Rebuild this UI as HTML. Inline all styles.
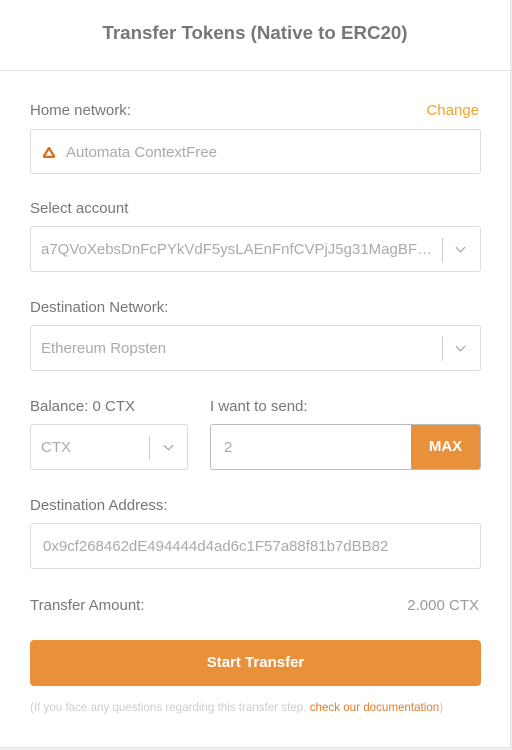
<!DOCTYPE html>
<html><head><style>
body{margin:0;width:512px;height:750px;background:#f0f0f0;font-family:"Liberation Sans",sans-serif;position:relative;overflow:hidden}
.card{position:absolute;left:0;top:0;width:510px;height:747px;background:#fff;border-right:1px solid #e4e4e4;border-bottom:1px solid #e4e4e4}
.t{position:absolute;left:0;width:510px;top:22px;text-align:center;font-size:18.7px;font-weight:bold;color:#777}
.hr{position:absolute;left:0;top:70px;width:510px;height:1px;background:#e2e2e2}
.l{position:absolute;font-size:15px;color:#777}
.box{position:absolute;border:1px solid #dcdcdc;border-radius:3px;box-sizing:border-box;font-size:15px;color:#aaa;line-height:45px;padding-left:10px;height:46px;white-space:nowrap;overflow:hidden}
.sep{position:absolute;top:11px;width:1px;height:24px;background:#ccc}
.ch{position:absolute;top:17px;width:6px;height:6px;border-right:1.5px solid #999;border-bottom:1.5px solid #999;transform:rotate(45deg)}
</style></head><body><div class="card">
<div class="t">Transfer Tokens (Native to ERC20)</div>
<div class="hr"></div>
<div class="l" style="left:30px;top:102px">Home network:</div>
<div class="l" style="right:31px;top:102px;color:#f5a02c">Change</div>
<div class="box" style="left:30px;top:129px;width:451px;height:45px;padding-left:35px">Automata ContextFree
<svg style="position:absolute;left:12px;top:17px" width="12" height="11" viewBox="0 0 12 11"><path d="M6 1 L11 9 Q11 10 10 10 L2 10 Q1 10 1 9 Z" fill="none" stroke="#d9701f" stroke-width="2.4" stroke-linejoin="round"/></svg></div>
<div class="l" style="left:30px;top:200px">Select account</div>
<div class="box" style="left:30px;top:226px;width:451px;padding-right:45px">a7QVoXebsDnFcPYkVdF5ysLAEnFnfCVPjJ5g31MagBF…<div style="position:absolute;right:0;top:0;width:38px;height:44px;background:#fff"></div><div class="sep" style="right:37px"></div><div class="ch" style="right:16px"></div></div>
<div class="l" style="left:30px;top:299px">Destination Network:</div>
<div class="box" style="left:30px;top:325px;width:451px">Ethereum Ropsten<div class="sep" style="right:37px"></div><div class="ch" style="right:16px"></div></div>
<div class="l" style="left:30px;top:398px">Balance: 0 CTX</div>
<div class="l" style="left:210px;top:398px">I want to send:</div>
<div class="box" style="left:30px;top:424px;width:158px">CTX<div class="sep" style="right:37px"></div><div class="ch" style="right:15px"></div></div>
<div class="box" style="left:210px;top:424px;width:271px;border-color:#bbb;padding-left:13px">2<div style="position:absolute;right:0;top:0;width:69px;height:46px;background:#e8913a;color:#fff;font-weight:bold;text-align:center;line-height:44px">MAX</div></div>
<div class="l" style="left:30px;top:497px">Destination Address:</div>
<div class="box" style="left:30px;top:523px;width:451px;padding-left:12px">0x9cf268462dE494444d4ad6c1F57a88f81b7dBB82</div>
<div class="l" style="left:30px;top:597px">Transfer Amount:</div>
<div class="l" style="right:31px;top:597px;color:#999">2.000 CTX</div>
<div style="position:absolute;left:30px;top:640px;width:451px;height:46px;background:#e8913a;border-radius:4px;color:#fff;font-weight:bold;font-size:15px;text-align:center;line-height:46px">Start Transfer</div>
<div style="position:absolute;left:30px;top:701px;font-size:11.6px;color:#ccc;white-space:nowrap">(If you face any questions regarding this transfer step, <span style="color:#e07d2a">check our documentation</span>)</div>
</div></body></html>
